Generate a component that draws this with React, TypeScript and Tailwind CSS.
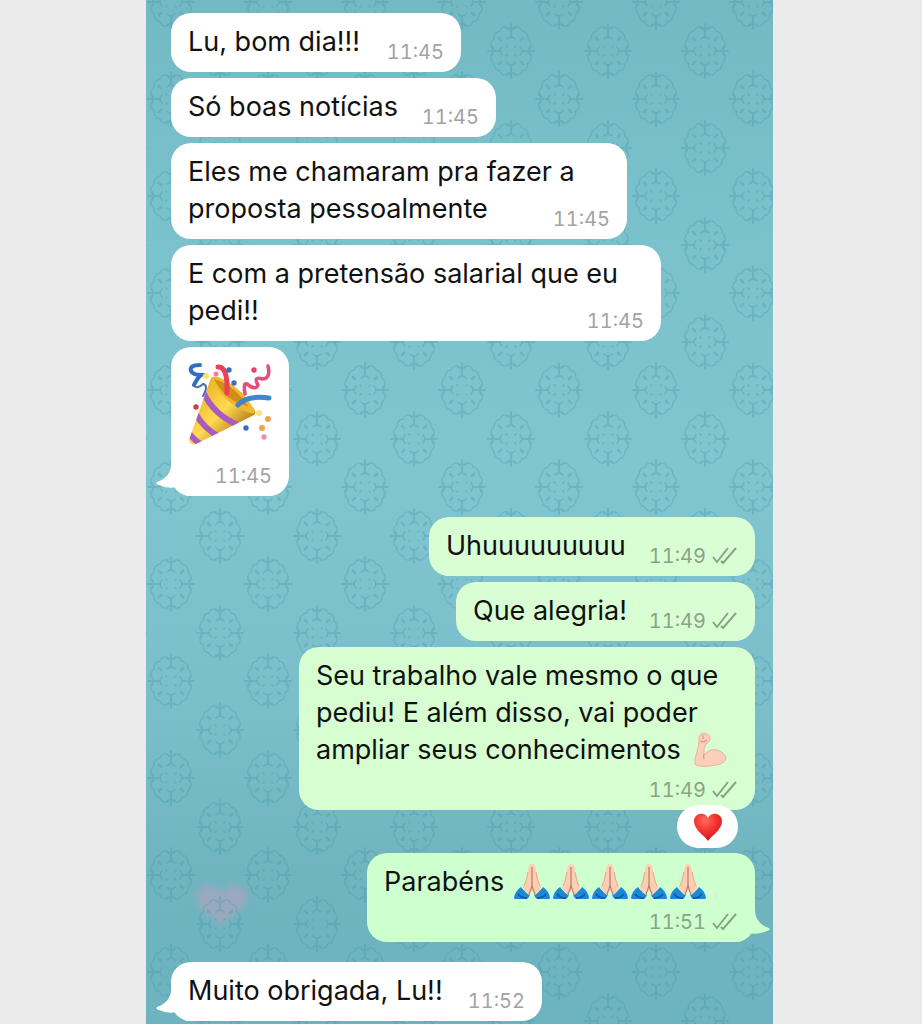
import type { ReactNode } from 'react'

type Message = {
  side: 'in' | 'out'
  lines: ReactNode[]
  time: string
  className: string
  timeBelow?: boolean
  tail?: boolean
  reaction?: boolean
}

const Motif = ({ x, y }: { x: number; y: number }) => (
  <g transform={`translate(${x} ${y})`}>
    <path
      d="M-4 -24Q-9 -25 -11 -20Q-17 -19 -17 -12Q-21 -9 -20 -4M4 -24Q9 -25 11 -20Q17 -19 17 -12Q21 -9 20 -4M-4 24Q-9 25 -11 20Q-17 19 -17 12Q-21 9 -20 4M4 24Q9 25 11 20Q17 19 17 12Q21 9 20 4"
      strokeWidth="1.4"
    />
    <path d="M0 -27V-14M0 27V14M-23 0H-11M23 0H11" strokeWidth="2.2" />
    <path d="M-4 -23Q0 -21 4 -23M-4 23Q0 21 4 23M-19 -4Q-17 0 -19 4M19 -4Q17 0 19 4" strokeWidth="2.2" />
    <path d="M-4 -12Q0 -16 4 -12M-4 12Q0 16 4 12M-9 -4Q-13 0 -9 4M9 -4Q13 0 9 4" />
    <path d="M-12 -13L-10 -11M12 -13L10 -11M-12 13L-10 11M12 13L10 11" strokeWidth="2.6" />
    <path d="M-5 -5L-4 -4M5 -5L4 -4M-5 5L-4 4M5 5L4 4" />
  </g>
)

const Wallpaper = () => (
  <svg className="absolute inset-0 h-full w-full" aria-hidden="true">
    <defs>
      <linearGradient id="shade" x1="0" y1="0" x2="0" y2="1">
        <stop offset="0" stopColor="#73b9c4" />
        <stop offset="0.2" stopColor="#79c1cb" />
        <stop offset="0.45" stopColor="#80c5d0" />
        <stop offset="0.7" stopColor="#7abeca" />
        <stop offset="0.85" stopColor="#6fb4bf" />
        <stop offset="1" stopColor="#6db4c0" />
      </linearGradient>
      <pattern id="damask" width="97" height="97" patternUnits="userSpaceOnUse" x="25" y="2">
        <g fill="none" stroke="#3f93a3" strokeWidth="1.7" strokeLinecap="round" opacity="0.32">
          <Motif x={49} y={49} />
          <Motif x={0} y={0} />
          <Motif x={97} y={0} />
          <Motif x={0} y={97} />
          <Motif x={97} y={97} />
        </g>
      </pattern>
      <filter id="soft">
        <feGaussianBlur stdDeviation="3" />
      </filter>
    </defs>
    <rect width="100%" height="100%" fill="url(#shade)" />
    <path
      d="M75 927C66 915 49 909 50 895C51 884 66 881 75 892C84 881 101 884 101 896C101 909 85 915 75 927Z"
      fill="#b7a2c0"
      opacity="0.6"
      filter="url(#soft)"
    />
    <rect width="100%" height="100%" fill="url(#damask)" />
  </svg>
)

const Popper = () => (
  <svg className="mb-2 block h-[84px] w-[84px]" viewBox="0 0 84 84" aria-hidden="true">
    <defs>
      <linearGradient id="cone" x1="0" y1="0" x2="1" y2="1">
        <stop offset="0.2" stopColor="#f0b72c" />
        <stop offset="0.5" stopColor="#ffdb52" />
        <stop offset="0.8" stopColor="#b87817" />
      </linearGradient>
      <clipPath id="coneClip">
        <path d="M23 16L1 78Q1 83 8 82L66 53Q70 50 62 43Q47 18 23 16Z" />
      </clipPath>
    </defs>
    <path d="M23 16L1 78Q1 83 8 82L66 53Q70 50 62 43Q47 18 23 16Z" fill="url(#cone)" />
    <g clipPath="url(#coneClip)" fill="none" stroke="#a95bc0" strokeWidth="6">
      <path d="M15 30Q26 53 50 63" />
      <path d="M8 52Q15 66 33 76" />
      <path d="M0 70Q6 78 14 83" />
    </g>
    <path d="M23 16Q26 12 38 19Q55 28 66 47Q69 54 59 50Q34 40 23 16Z" fill="#efb830" />
    <path d="M26 17Q46 23 60 44Q38 40 26 17Z" fill="#d08d18" />
    <g fill="none" strokeLinecap="round">
      <path d="M30 5Q40 4 39 31" stroke="#ef3f55" strokeWidth="5" />
      <path d="M50 43Q58 33 81 36" stroke="#3f83d3" strokeWidth="5" />
      <path d="M12 3Q1 3 3 9Q5 13 13 13Q10 15 6 23" stroke="#2f6fc2" strokeWidth="4" />
      <path d="M5 23Q9 28 15 22Q21 23 15 34" stroke="#4b6da8" strokeWidth="2" />
      <path d="M57 32Q55 20 59 22Q68 29 70 23Q65 14 74 17Q83 17 80 4" stroke="#ea4c79" strokeWidth="3.5" />
    </g>
    <circle cx="41" cy="8" r="2.7" fill="#356fc0" />
    <circle cx="46" cy="21" r="2.7" fill="#356fc0" />
    <circle cx="58" cy="66" r="2.7" fill="#356fc0" />
    <circle cx="28" cy="12" r="2.5" fill="#f57ca6" />
    <circle cx="66" cy="8" r="2.7" fill="#e7446a" />
    <circle cx="8" cy="45" r="2.7" fill="#d23b4e" />
    <circle cx="18" cy="14" r="3" fill="#ffe36b" />
    <circle cx="71" cy="51" r="3" fill="#ffe36b" />
    <circle cx="80" cy="57" r="3" fill="#f2a24b" />
    <circle cx="74" cy="66" r="3" fill="#f2a24b" />
    <circle cx="76" cy="75" r="2.7" fill="#f48bb4" />
  </svg>
)

const Hands = () => (
  <svg className="h-9 w-9" viewBox="0 0 36 36" aria-hidden="true">
    <path d="M0 34Q1 27 7 23Q10 28 16 30Q15 35 12 35H1Q0 35 0 34Z" fill="#1b8ad6" />
    <path d="M36 34Q35 27 29 23Q26 28 20 30Q21 35 24 35H35Q36 35 36 34Z" fill="#1b8ad6" />
    <path d="M4 30Q7 34 13 34M32 30Q29 34 23 34" fill="none" stroke="#10609f" strokeWidth="2" />
    <path
      d="M17 0Q15 0 14 6L12 16L9 23Q10 28 15 31L18 26L21 31Q26 28 27 23L24 16L22 6Q21 0 19 0Q18 0 18 2Q18 0 17 0Z"
      fill="#fccfb2"
    />
    <path d="M18 3V22M18 21Q17 26 15 30M18 21Q19 26 21 30" stroke="#b9796a" strokeWidth="1.2" fill="none" />
    <path d="M14 8L12 17L10 22M22 8L24 17L26 22" stroke="#eba68b" strokeWidth="1" fill="none" />
  </svg>
)

const Biceps = () => (
  <svg className="h-9 w-9" viewBox="0 0 36 36" aria-hidden="true">
    <path
      d="M8 2Q11 0 14 2Q18 4 17 8Q15 11 13 12Q10 16 11 23Q17 16 24 18Q32 20 33 27Q31 33 16 34Q5 35 2 32Q1 28 4 20Q6 14 6 9Q5 4 8 2Z"
      fill="#fccfba"
      stroke="#eeb09a"
      strokeWidth="1"
    />
    <path d="M11 22Q10 24 11 27M7 9Q11 11 14 8M10 3V7" fill="none" stroke="#dd9680" strokeWidth="1.2" />
  </svg>
)

const Heart = () => (
  <svg className="h-[30px] w-[30px]" viewBox="0 0 30 30" aria-hidden="true">
    <defs>
      <radialGradient id="heart" cx="0.4" cy="0.25" r="0.8">
        <stop offset="0" stopColor="#ff6a5c" />
        <stop offset="0.5" stopColor="#f4322f" />
        <stop offset="1" stopColor="#c9141c" />
      </radialGradient>
    </defs>
    <path d="M15 29C11 23 1 18 1 9C1 1 12 -1 15 6C18 -1 29 1 29 9C29 18 19 23 15 29Z" fill="url(#heart)" />
  </svg>
)

const Checks = () => (
  <svg className="h-5 w-7" viewBox="0 0 28 20" fill="none" stroke="currentColor" strokeWidth="2" aria-hidden="true">
    <path d="M3 11L7 16L18 2" />
    <path d="M11 15L13 17L26 2" />
  </svg>
)

const Tail = ({ side }: { side: 'in' | 'out' }) => (
  <svg
    className={
      side === 'in'
        ? 'absolute bottom-0 -left-[15px] h-10 w-8 fill-white'
        : 'absolute -right-[15px] bottom-0 h-10 w-8 -scale-x-100 fill-[#cdffcf]'
    }
    viewBox="0 0 32 40"
    aria-hidden="true"
  >
    <path d="M15 0V8Q15 21 1 26Q-1 28 3 29Q12 33 20 31Q25 39 32 40V0Z" />
  </svg>
)

const Bubble = ({ message }: { message: Message }) => {
  const { side, lines, time, className, timeBelow, tail, reaction } = message
  const stamp = (
    <span
      className={`flex shrink-0 items-center justify-end gap-1 text-xl leading-6 tabular-nums ${
        side === 'in' ? 'text-[#a3a3a3]' : 'text-[#8aa388]'
      }`}
    >
      <time>{time}</time>
      {side === 'out' && <Checks />}
    </span>
  )

  return (
    <li
      className={`relative max-w-full rounded-[20px] px-[17px] pb-3 ${
        side === 'in' ? 'self-start bg-white' : 'self-end'
      } ${className}`}
    >
      {tail && <Tail side={side} />}
      {lines.map((line, i) => (
        <div key={i} className="relative flex items-end justify-between whitespace-nowrap">
          <p className="flex items-center">{line}</p>
          {!timeBelow && i === lines.length - 1 && <div className="-mb-1">{stamp}</div>}
        </div>
      ))}
      {timeBelow && <div className="relative -mb-1 pt-2.5">{stamp}</div>}
      {reaction && (
        <div className="absolute right-[17px] -bottom-[38px] z-10 flex h-[43px] w-[61px] items-center justify-center rounded-full bg-white">
          <Heart />
        </div>
      )}
    </li>
  )
}

const messages: Message[] = [
  { side: 'in', lines: ['Lu, bom dia!!!'], time: '11:45', className: 'w-[290px] pt-2.5' },
  { side: 'in', lines: ['Só boas notícias'], time: '11:45', className: 'w-[325px] pt-2.5' },
  {
    side: 'in',
    lines: ['Eles me chamaram pra fazer a', 'proposta pessoalmente'],
    time: '11:45',
    className: 'w-[456px] pt-2.5',
  },
  {
    side: 'in',
    lines: ['E com a pretensão salarial que eu', 'pedi!!'],
    time: '11:45',
    className: 'w-[490px] pt-2.5',
  },
  {
    side: 'in',
    lines: [<Popper key="popper" />],
    time: '11:45',
    className: 'w-[118px] mb-[15px] pt-[15px]',
    timeBelow: true,
    tail: true,
  },
  { side: 'out', lines: ['Uhuuuuuuuuu'], time: '11:49', className: 'w-[326px] pt-2.5 bg-[#dafed3]' },
  { side: 'out', lines: ['Que alegria!'], time: '11:49', className: 'w-[299px] pt-2.5 bg-[#dafed3]' },
  {
    side: 'out',
    lines: [
      'Seu trabalho vale mesmo o que',
      'pediu! E além disso, vai poder',
      <>
        ampliar seus conhecimentos
        <span className="ml-3">
          <Biceps />
        </span>
      </>,
    ],
    time: '11:49',
    className: 'w-[456px] mb-[37px] pt-2.5 bg-[#d6fed1]',
    timeBelow: true,
    reaction: true,
  },
  {
    side: 'out',
    lines: [
      <>
        Parabéns
        <span className="ml-2.5 flex gap-[3px]">
          <Hands />
          <Hands />
          <Hands />
          <Hands />
          <Hands />
        </span>
      </>,
    ],
    time: '11:51',
    className: 'w-[388px] mb-[14px] pt-2.5 bg-[#cdffcf]',
    timeBelow: true,
    tail: true,
  },
  { side: 'in', lines: ['Muito obrigada, Lu!!'], time: '11:52', className: 'w-[371px] pt-2.5', tail: true },
]

const App = () => {
  return (
    <div className="grid min-h-screen grid-cols-[146fr_627fr_149fr] bg-[#ebebeb] font-['Inter',sans-serif]">
      <main className="relative col-start-2 overflow-hidden">
        <Wallpaper />
        <ol className="relative flex flex-col gap-1.5 pt-[13px] pr-[18px] pb-[3px] pl-[25px] text-[27px] leading-[37px] text-[#111]">
          {messages.map((message, i) => (
            <Bubble key={i} message={message} />
          ))}
        </ol>
      </main>
    </div>
  )
}

export default App
